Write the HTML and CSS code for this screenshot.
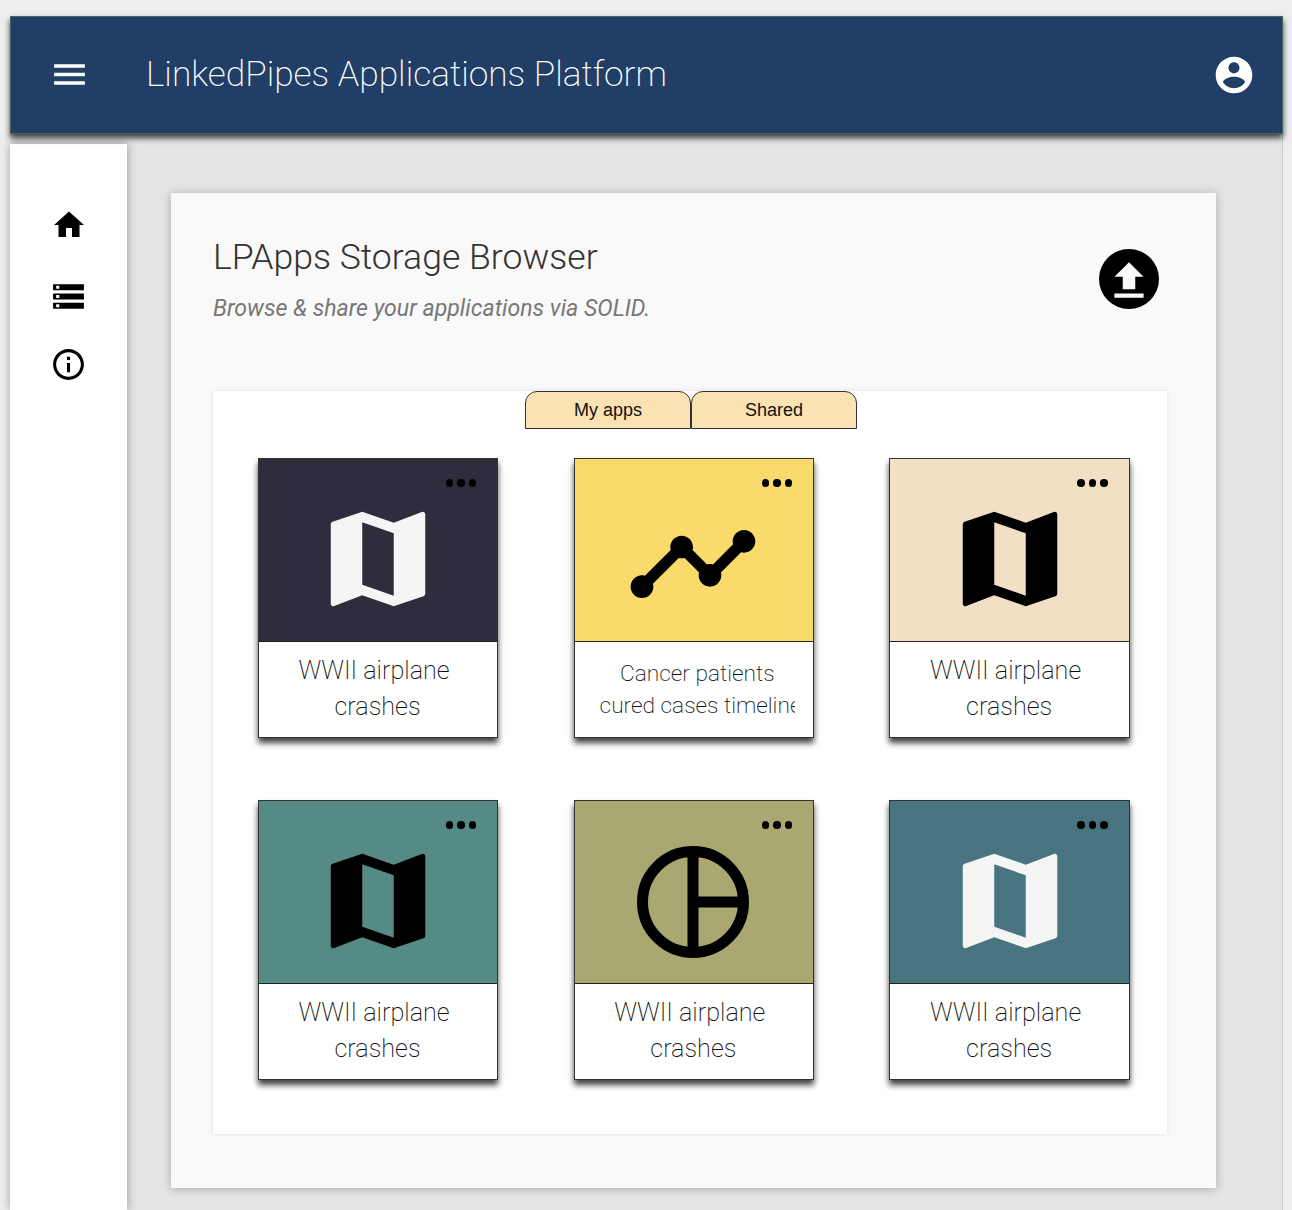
FILE: index.html
```html
<!DOCTYPE html>
<html lang="en">

<head>
    <meta charset="UTF-8">
    <meta name="viewport" content="width=device-width, initial-scale=1.0">
    <title>LinkedPipes Applications Platform</title>
    <link rel="stylesheet" href="styles.css">
</head>

<body>
    <div class="frame">
        <header class="topBar">
            <svg class="menuIcon" viewBox="0 0 24 24"><path d="M3 18h18v-2H3v2zm0-5h18v-2H3v2zm0-7v2h18V6H3z"/></svg>
            <h1 class="appTitle">LinkedPipes Applications Platform</h1>
            <svg class="accountIcon" viewBox="0 0 24 24"><path d="M12 2C6.48 2 2 6.48 2 12s4.48 10 10 10 10-4.48 10-10S17.52 2 12 2zm0 3c1.66 0 3 1.34 3 3s-1.34 3-3 3-3-1.34-3-3 1.34-3 3-3zm0 14.2c-2.5 0-4.71-1.28-6-3.22.03-1.99 4-3.08 6-3.08 1.99 0 5.97 1.09 6 3.08-1.29 1.94-3.5 3.22-6 3.22z"/></svg>
        </header>

        <div class="contentRow">
            <nav class="sideBar">
                <svg class="navIcon" viewBox="0 0 24 24"><path d="M10 20v-6h4v6h5v-8h3L12 3 2 12h3v8z"/></svg>
                <svg class="navIcon navStorage" viewBox="0 0 24 24"><path d="M2 20h20v-4H2v4zm2-3h2v2H4v-2zM2 4v4h20V4H2zm4 3H4V5h2v2zm-4 7h20v-4H2v4zm2-3h2v2H4v-2z"/></svg>
                <svg class="navIcon navInfo" viewBox="0 0 24 24"><path d="M11 7h2v2h-2zm0 4h2v6h-2zm1-9C6.48 2 2 6.48 2 12s4.48 10 10 10 10-4.48 10-10S17.52 2 12 2zm0 18c-4.41 0-8-3.59-8-8s3.59-8 8-8 8 3.59 8 8-3.59 8-8 8z"/></svg>
            </nav>

            <main class="mainArea">
                <section class="panel">
                    <div class="panelHead">
                        <div>
                            <h2 class="panelTitle">LPApps Storage Browser</h2>
                            <p class="panelSubtitle">Browse &amp; share your applications via SOLID.</p>
                        </div>
                        <button class="uploadButton">
                            <svg viewBox="0 0 24 24"><path d="M9 16h6v-6h4l-7-7-7 7h4zm-4 2h14v2H5z"/></svg>
                        </button>
                    </div>

                    <div class="browser">
                        <div class="tabs">
                            <div class="tab">My apps</div>
                            <div class="tab">Shared</div>
                        </div>

                        <div class="cardGrid">
                            <article class="card">
                                <div class="cardImage bgDark">
                                    <svg class="mapIcon iconLight" viewBox="0 0 24 24"><path d="M20.5 3l-.16.03L15 5.1 9 3 3.36 4.9c-.21.07-.36.25-.36.48V20.5c0 .28.22.5.5.5l.16-.03L9 18.9l6 2.1 5.64-1.9c.21-.07.36-.25.36-.48V3.5c0-.28-.22-.5-.5-.5zM15 19l-6-2.11V5l6 2.11V19z"/></svg>
                                    <div class="dots"><i></i><i></i><i></i></div>
                                </div>
                                <div class="caption"><span class="lineOne">WWII airplane</span><span>crashes</span></div>
                            </article>

                            <article class="card">
                                <div class="cardImage bgYellow">
                                    <svg class="chartIcon" viewBox="0 0 24 24"><path d="M23 8c0 1.1-.9 2-2 2-.18 0-.35-.02-.51-.07l-3.56 3.55c.05.16.07.34.07.52 0 1.1-.9 2-2 2s-2-.9-2-2c0-.18.02-.36.07-.52l-2.55-2.55c-.16.05-.34.07-.52.07s-.36-.02-.52-.07l-4.55 4.56c.05.16.07.33.07.51 0 1.1-.9 2-2 2s-2-.9-2-2 .9-2 2-2c.18 0 .35.02.51.07l4.56-4.55C8.02 9.36 8 9.18 8 9c0-1.1.9-2 2-2s2 .9 2 2c0 .18-.02.36-.07.52l2.55 2.55c.16-.05.34-.07.52-.07s.36.02.52.07l3.55-3.56C19.02 8.35 19 8.18 19 8c0-1.1.9-2 2-2s2 .9 2 2z"/></svg>
                                    <div class="dots"><i></i><i></i><i></i></div>
                                </div>
                                <div class="caption captionSmall"><span>Cancer patients</span><span>cured cases timeline</span></div>
                            </article>

                            <article class="card">
                                <div class="cardImage bgBeige">
                                    <svg class="mapIcon" viewBox="0 0 24 24"><path d="M20.5 3l-.16.03L15 5.1 9 3 3.36 4.9c-.21.07-.36.25-.36.48V20.5c0 .28.22.5.5.5l.16-.03L9 18.9l6 2.1 5.64-1.9c.21-.07.36-.25.36-.48V3.5c0-.28-.22-.5-.5-.5zM15 19l-6-2.11V5l6 2.11V19z"/></svg>
                                    <div class="dots"><i></i><i></i><i></i></div>
                                </div>
                                <div class="caption"><span class="lineOne">WWII airplane</span><span>crashes</span></div>
                            </article>

                            <article class="card">
                                <div class="cardImage bgTeal">
                                    <svg class="mapIcon" viewBox="0 0 24 24"><path d="M20.5 3l-.16.03L15 5.1 9 3 3.36 4.9c-.21.07-.36.25-.36.48V20.5c0 .28.22.5.5.5l.16-.03L9 18.9l6 2.1 5.64-1.9c.21-.07.36-.25.36-.48V3.5c0-.28-.22-.5-.5-.5zM15 19l-6-2.11V5l6 2.11V19z"/></svg>
                                    <div class="dots"><i></i><i></i><i></i></div>
                                </div>
                                <div class="caption"><span class="lineOne">WWII airplane</span><span>crashes</span></div>
                            </article>

                            <article class="card">
                                <div class="cardImage bgOlive">
                                    <svg class="pieIcon" viewBox="0 0 112 112"><circle cx="56" cy="56" r="50.5"/><path d="M56 6v100M56 56h50"/></svg>
                                    <div class="dots"><i></i><i></i><i></i></div>
                                </div>
                                <div class="caption"><span class="lineOne">WWII airplane</span><span>crashes</span></div>
                            </article>

                            <article class="card">
                                <div class="cardImage bgSlate">
                                    <svg class="mapIcon iconLight" viewBox="0 0 24 24"><path d="M20.5 3l-.16.03L15 5.1 9 3 3.36 4.9c-.21.07-.36.25-.36.48V20.5c0 .28.22.5.5.5l.16-.03L9 18.9l6 2.1 5.64-1.9c.21-.07.36-.25.36-.48V3.5c0-.28-.22-.5-.5-.5zM15 19l-6-2.11V5l6 2.11V19z"/></svg>
                                    <div class="dots"><i></i><i></i><i></i></div>
                                </div>
                                <div class="caption"><span class="lineOne">WWII airplane</span><span>crashes</span></div>
                            </article>
                        </div>
                    </div>
                </section>
            </main>
        </div>
    </div>
</body>

</html>
```

FILE: styles.css
```css
html,
body {
    height: 1210px;
    overflow: hidden;
}

body {
    margin: 0;
    padding: 16px 9px 0 10px;
    box-sizing: border-box;
    background-color: #eeeeee;
    font-family: Roboto, "Liberation Sans", sans-serif;
}

.frame {
    height: 1194px;
    background-color: #e4e4e4;
    border-right: 1px solid #cccccc;
    display: flex;
    flex-direction: column;
}

.topBar {
    height: 118px;
    margin-right: -1px;
    box-sizing: border-box;
    background-color: #213f66;
    border: 1px solid #44645f;
    box-shadow: 0 4px 6px rgba(0, 0, 0, 0.75);
    display: flex;
    align-items: center;
    position: relative;
    z-index: 2;
}

.menuIcon {
    width: 41px;
    height: 41px;
    margin: -1px 0 0 38px;
    fill: #ffffff;
}

.appTitle {
    margin: -3px 0 0 56px;
    flex: 1;
    font-size: 35.3px;
    font-weight: 200;
    color: #ffffff;
}

.accountIcon {
    width: 44px;
    height: 44px;
    margin-right: 26px;
    fill: #ffffff;
}

.contentRow {
    flex: 1;
    display: flex;
    min-height: 0;
}

.sideBar {
    width: 117px;
    margin-top: 10px;
    padding-top: 63px;
    box-sizing: border-box;
    background-color: #ffffff;
    box-shadow: 0 0 9px rgba(0, 0, 0, 0.35);
    display: flex;
    flex-direction: column;
    align-items: center;
}

.navIcon {
    width: 36px;
    height: 36px;
    flex: none;
}

.navStorage {
    width: 37px;
    height: 37px;
    margin-top: 35px;
}

.navInfo {
    width: 37px;
    height: 37px;
    margin-top: 31px;
}

.mainArea {
    flex: 1;
    padding: 59px 0 0 44px;
}

.panel {
    width: 1045px;
    height: 995px;
    box-sizing: border-box;
    padding: 40px 0 0 42px;
    background-color: #f9f9f9;
    box-shadow: 0 1px 9px rgba(0, 0, 0, 0.25);
}

.panelHead {
    height: 158px;
    display: flex;
    justify-content: space-between;
    align-items: flex-start;
}

.panelTitle {
    margin: 0;
    font-size: 35.6px;
    line-height: 48px;
    font-weight: 300;
    color: #333333;
}

.panelSubtitle {
    margin: 15px 0 0;
    font-size: 23.1px;
    line-height: 26px;
    font-style: italic;
    color: #777777;
}

.uploadButton {
    width: 60px;
    height: 60px;
    margin: 16px 57px 0 0;
    padding: 4px 0 0;
    border: none;
    border-radius: 50%;
    background-color: #000000;
    display: flex;
    align-items: center;
    justify-content: center;
}

.uploadButton svg {
    width: 50px;
    height: 50px;
    fill: #f9f9f9;
}

.browser {
    width: 954px;
    height: 743px;
    background-color: #ffffff;
    box-shadow: 0 0 4px rgba(0, 0, 0, 0.12);
}

.tabs {
    display: flex;
    justify-content: center;
    margin-left: 2px;
}

.tab {
    width: 166px;
    height: 38px;
    box-sizing: border-box;
    background-color: #fae2b2;
    border: 1px solid #333333;
    border-top-left-radius: 12px;
    border-top-right-radius: 12px;
    font-family: "Liberation Sans", Arial, sans-serif;
    font-size: 18px;
    line-height: 36px;
    text-align: center;
    color: #111111;
}

.cardGrid {
    display: grid;
    grid-template-columns: repeat(3, 240.5px);
    column-gap: 75.3px;
    row-gap: 62px;
    padding: 29px 0 0 44.8px;
}

.card {
    height: 280px;
    box-sizing: border-box;
    background-color: #ffffff;
    border: 1.5px solid #333333;
    box-shadow: 0 5px 6px rgba(0, 0, 0, 0.75);
    display: flex;
    flex-direction: column;
}

.cardImage {
    height: 182px;
    flex: none;
    border-bottom: 1.5px solid #222222;
    display: flex;
    justify-content: center;
    align-items: center;
    position: relative;
}

.bgDark { background-color: #2f2c3d; }
.bgYellow { background-color: #f9db6b; }
.bgBeige { background-color: #f2e0c5; }
.bgTeal { background-color: #568a85; }
.bgOlive { background-color: #a9a870; }
.bgSlate { background-color: #47747e; }

.mapIcon {
    width: 126px;
    height: 126px;
    margin-top: 18px;
}

.iconLight {
    fill: #f5f5f5;
}

.chartIcon {
    width: 136px;
    height: 136px;
    margin: 28px 2px 0 0;
}

.pieIcon {
    width: 112px;
    height: 112px;
    margin: 20px 2px 0 0;
    fill: none;
    stroke: #000000;
    stroke-width: 11;
}

.dots {
    position: absolute;
    top: 20px;
    right: 21px;
    display: flex;
    gap: 4px;
}

.dots i {
    width: 7.5px;
    height: 7.5px;
    border-radius: 50%;
    background-color: #000000;
}

.caption {
    padding: 11px 1px 0 0;
    font-size: 25.2px;
    line-height: 35.5px;
    font-weight: 200;
    text-align: center;
    color: #111111;
}

.caption span {
    display: block;
}

.caption .lineOne {
    padding-right: 7px;
}

.captionSmall {
    margin: 0 18px 0 25px;
    padding: 16px 0 0;
    overflow: hidden;
    white-space: nowrap;
    font-size: 22.7px;
    line-height: 32px;
}
```
